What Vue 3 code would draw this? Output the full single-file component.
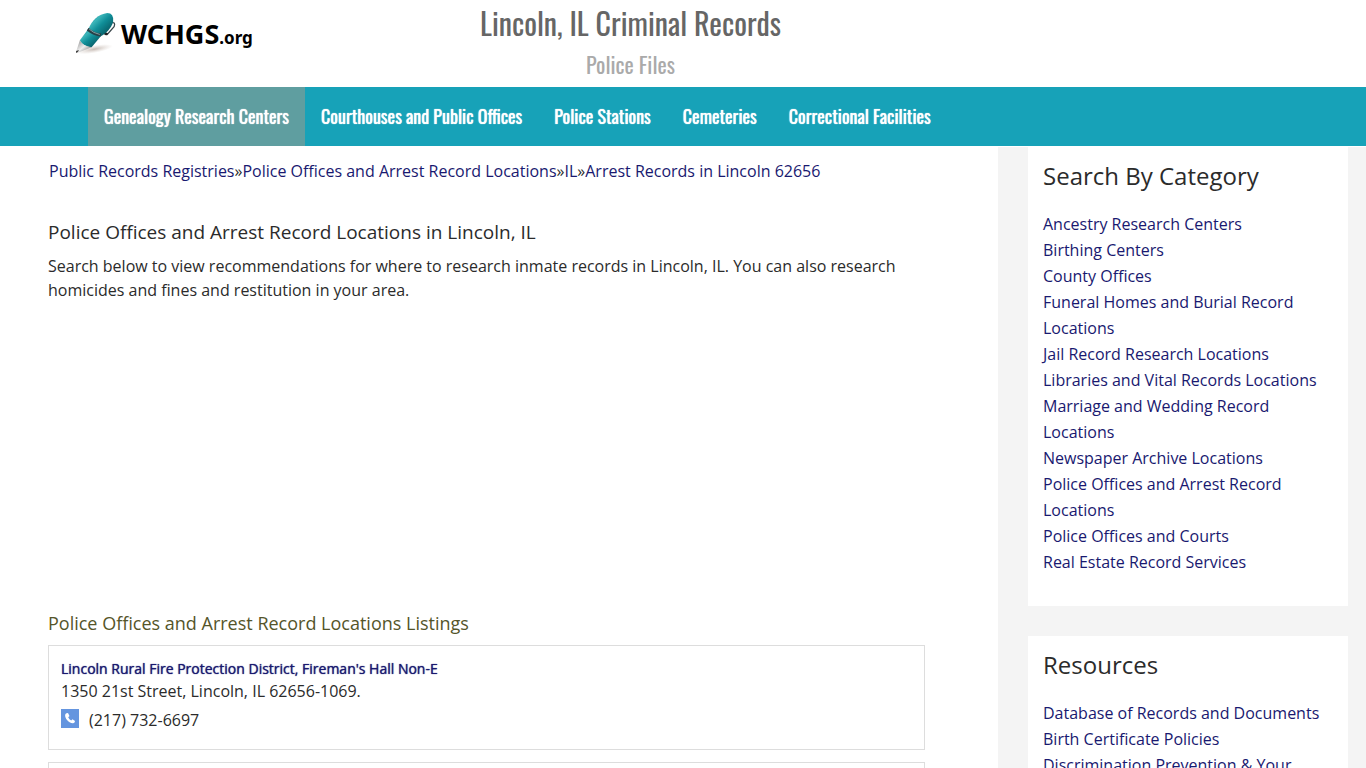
<script setup>
const nav = ['Genealogy Research Centers', 'Courthouses and Public Offices', 'Police Stations', 'Cemeteries', 'Correctional Facilities']
const crumbs = ['Public Records Registries', 'Police Offices and Arrest Record Locations', 'IL', 'Arrest Records in Lincoln 62656']
const categories = [
  'Ancestry Research Centers', 'Birthing Centers', 'County Offices', 'Funeral Homes and Burial Record Locations',
  'Jail Record Research Locations', 'Libraries and Vital Records Locations', 'Marriage and Wedding Record Locations',
  'Newspaper Archive Locations', 'Police Offices and Arrest Record Locations', 'Police Offices and Courts',
  'Real Estate Record Services'
]
const resources = ['Database of Records and Documents', 'Birth Certificate Policies', 'Discrimination Prevention & Your']
</script>

<template>
  <div class="page">
    <header class="header">
      <a class="logo" href="#" aria-label="WCHGS.org">
        <svg class="pen" viewBox="0 0 44 44" aria-hidden="true">
          <defs>
            <linearGradient id="barrel" x1="0" y1="0" x2="1" y2="1">
              <stop offset="0" stop-color="#0b6f78" />
              <stop offset=".3" stop-color="#3bb5b9" />
              <stop offset=".5" stop-color="#108e98" />
              <stop offset="1" stop-color="#043f47" />
            </linearGradient>
            <linearGradient id="tip" x1="0" y1="0" x2="1" y2="1">
              <stop offset="0" stop-color="#888" />
              <stop offset=".5" stop-color="#eee" />
              <stop offset="1" stop-color="#555" />
            </linearGradient>
            <radialGradient id="shade">
              <stop offset="0" stop-color="#a08c80" stop-opacity=".6" />
              <stop offset="1" stop-color="#c8bab0" stop-opacity="0" />
            </radialGradient>
          </defs>
          <ellipse cx="20" cy="38" rx="19" ry="4" fill="url(#shade)" transform="rotate(-10 20 38)" />
          <path d="M37 11q5-1 3 4l-7 8-2-1" fill="none" stroke="#39464a" stroke-width="1.3" />
          <path d="M30 20l4 2-2 2-4-2z" fill="#222" />
          <path d="M14 17C17 9 24 2 33 1q7 0 6 9C37 17 32 22 26 25z" fill="url(#barrel)" />
          <path d="M14 17L5 29q3 7 12 7l10-12z" fill="url(#barrel)" />
          <path d="M14 16q5 5 13 6l-1 3q-8-1-14-6z" fill="#284047" />
          <path d="M14.500 17.500q4 4 11 5.500" fill="none" stroke="#a5c9ca" stroke-width=".7" />
          <path d="M5 29L1 41l1 1 15-6q-9-1-12-7z" fill="url(#tip)" />
          <path d="M1 40l3-1-1 2-2 1z" fill="#444" />
        </svg>
        <span class="brand">WCHGS<small>.org</small></span>
      </a>
      <div class="titles">
        <h1>Lincoln, IL Criminal Records</h1>
        <p>Police Files</p>
      </div>
    </header>

    <nav class="nav" aria-label="Main">
      <a v-for="(item, i) in nav" :key="item" href="#" :class="{ active: i === 0 }">{{ item }}</a>
    </nav>

    <div class="body">
      <main class="main">
        <div class="crumbs">
          <template v-for="(c, i) in crumbs" :key="c"><span v-if="i">»</span><a href="#">{{ c }}</a></template>
        </div>
        <h2>Police Offices and Arrest Record Locations in Lincoln, IL</h2>
        <p class="intro">Search below to view recommendations for where to research inmate records in Lincoln, IL. You can also research homicides and fines and restitution in your area.</p>
        <div class="banner"></div>
        <h3>Police Offices and Arrest Record Locations Listings</h3>
        <article class="card">
          <a class="name" href="#">Lincoln Rural Fire Protection District, Fireman's Hall Non-E</a>
          <div class="address">1350 21st Street, Lincoln, IL 62656-1069.</div>
          <div class="phone">
            <svg viewBox="0 0 18 19" aria-hidden="true">
              <rect width="18" height="19" fill="#6495df" />
              <path d="M5.500 4.200L7 4l1.500 3-1.300 1.300q1 2.200 3 3.200l1.300-1.200 2.500 1.600q0 1.900-1.800 2.300C7.500 14.500 3.500 8.500 4.200 5.700q.3-1.100 1.300-1.500z" fill="#fff" />
            </svg>
            <span>(217) 732-6697</span>
          </div>
        </article>
        <article class="card"></article>
      </main>

      <aside class="side">
        <section class="panel">
          <h2>Search By Category</h2>
          <ul><li v-for="c in categories" :key="c"><a href="#">{{ c }}</a></li></ul>
        </section>
        <section class="panel">
          <h2>Resources</h2>
          <ul><li v-for="r in resources" :key="r"><a href="#">{{ r }}</a></li></ul>
        </section>
      </aside>
    </div>
  </div>
</template>

<style>
html, body { height: 100%; overflow: hidden; }
#app { height: 100%; }
</style>

<style scoped>
.page { height: 100%; overflow: hidden; display: flex; flex-direction: column; background: #f4f4f4; color: #2b2b2b; font: 16px/24px "Open Sans", sans-serif; }
h1, h2, h3, p, ul { margin: 0; padding: 0; font-weight: 400; }
ul { list-style: none; }
a { color: #191970; text-decoration: none; }
.header { flex: none; height: 87px; background: #fff; display: flex; }
.logo { flex: none; display: flex; width: 480px; padding: 12px 0 0 75px; box-sizing: border-box; color: #000; }
.pen { width: 43px; height: 43px; }
.brand { font: 700 27px/44px "Noto Sans", sans-serif; padding-left: 3px; }
.brand small { font-size: 17px; }
.titles { text-align: center; white-space: nowrap; font-family: Oswald, "Open Sans", sans-serif; }
.titles h1 { font-size: 30px; line-height: 46px; color: #666; }
.titles p { font-size: 22px; line-height: 36px; color: #aaa; }
.nav { flex: none; display: flex; background: #17a2b8; padding-left: 88px; border-bottom: 1px solid #fff; }
.nav a { color: #fff; padding: 0 16px; font: 400 18px/59px Oswald, "Open Sans", sans-serif; white-space: nowrap; text-shadow: 0 0 1px #fff; }
.nav .active { background: #5f9ea0; }
.body { flex: 1; min-height: 0; display: flex; gap: 30px; padding-right: 18px; }
.main { flex: 1; background: #fff; padding: 12px 73px 0 48px; }
.crumbs { padding-left: 1px; }
.main h2 { font-size: 19px; line-height: 28px; margin-top: 35px; }
.intro { margin-top: 8px; }
.banner { height: 307px; }
.main h3 { font-size: 18px; line-height: 28px; color: #55552a; }
.card { border: 1px solid #ddd; margin-top: 8px; padding: 12px 12px 11px; }
.card + .card { margin-top: 12px; min-height: 74px; }
.name { display: block; font-size: 14px; line-height: 22px; font-weight: 500; text-shadow: 0 0 1px #191970; }
.address { line-height: 22px; }
.phone { display: flex; align-items: flex-start; gap: 10px; line-height: 36px; }
.phone svg { width: 18px; height: 19px; margin-top: 7px; }
.side { width: 320px; display: flex; flex-direction: column; gap: 30px; }
.panel { background: #fff; padding: 11px 15px 31px; }
.panel h2 { font-size: 24px; line-height: 36px; margin-bottom: 17px; }
.panel li { line-height: 26px; }
</style>
